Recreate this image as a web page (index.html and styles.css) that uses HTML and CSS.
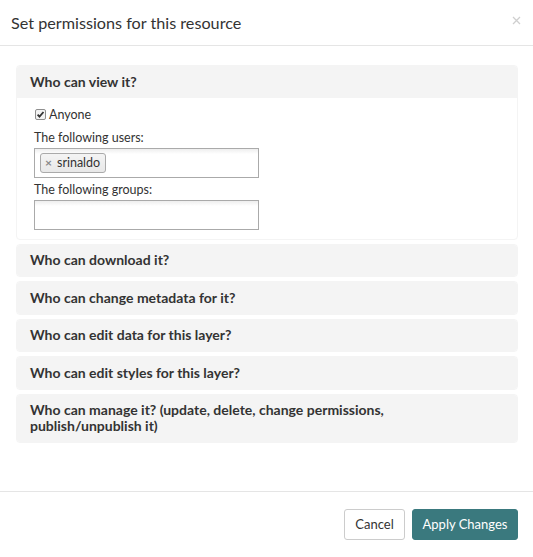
FILE: index.html
```html
<!DOCTYPE html>
<html>
<head>
<meta charset="utf-8">
<link rel="stylesheet" href="styles.css">
</head>
<body>
<div class="modal">
  <div class="modal-header">
    <h4 class="modal-title">Set permissions for this resource</h4>
    <button class="close" aria-label="Close">
      <svg width="9" height="9" viewBox="0 0 9 9"><path d="M1 1L8 8M8 1L1 8" stroke="#cfcfcf" stroke-width="1.3" fill="none"/></svg>
    </button>
  </div>
  <div class="modal-body">
    <div class="panel">
      <div class="panel-heading">Who can view it?</div>
      <div class="panel-body">
        <label class="check-row">
          <span class="checkbox">
            <svg width="11" height="11" viewBox="0 0 11 11"><rect x="0.5" y="0.5" width="10" height="10" rx="1.5" fill="#f3f3f3" stroke="#8f8f8f"/><path d="M2.6 5.6L4.5 7.6L8.5 3" stroke="#333" stroke-width="1.8" fill="none"/></svg>
          </span>
          <span>Anyone</span>
        </label>
        <div class="field-label">The following users:</div>
        <div class="tag-input">
          <span class="tag"><span class="tag-x">×</span>srinaldo</span>
        </div>
        <div class="field-label">The following groups:</div>
        <div class="tag-input"></div>
      </div>
    </div>
    <div class="panel"><div class="panel-heading">Who can download it?</div></div>
    <div class="panel"><div class="panel-heading">Who can change metadata for it?</div></div>
    <div class="panel"><div class="panel-heading">Who can edit data for this layer?</div></div>
    <div class="panel"><div class="panel-heading">Who can edit styles for this layer?</div></div>
    <div class="panel"><div class="panel-heading">Who can manage it? (update, delete, change permissions,<br>publish/unpublish it)</div></div>
  </div>
  <div class="modal-footer">
    <button class="btn btn-default">Cancel</button>
    <button class="btn btn-primary">Apply Changes</button>
  </div>
</div>
</body>
</html>
```

FILE: styles.css
```css
* { box-sizing: border-box; }
html, body { margin: 0; padding: 0; background: #fff; }
body {
  font-family: Lato, "Open Sans", sans-serif;
  color: #333;
  font-size: 13px;
}
.modal { width: 533px; height: 557px; background: #fff; }
.modal-header {
  display: flex;
  justify-content: space-between;
  align-items: flex-start;
  padding: 12px 11px 12px 11px;
  border-bottom: 1px solid #e5e5e5;
  height: 46px;
}
.modal-title {
  margin: 0;
  font-size: 16.2px;
  font-weight: 400;
  line-height: 21px;
  color: #333;
}
.close {
  border: 0;
  background: none;
  padding: 0;
  margin: 4px 1px 0 0;
  line-height: 0;
  cursor: pointer;
}
.modal-body {
  padding: 19px 15px 48px 16px;
  height: 445px;
}
.panel {
  background: #fff;
  border: 1px solid #f4f4f4;
  border-radius: 4px;
  margin-bottom: 4px;
  overflow: hidden;
}
.panel-heading {
  background: #f4f4f4;
  padding: 7.75px 13px 7.75px 13px;
  font-size: 14px;
  line-height: 16px;
  font-weight: 700;
  color: #333;
}
.panel-body {
  padding: 9px 17px 9px 17px;
}
.check-row {
  display: flex;
  align-items: center;
  gap: 3px;
  height: 16px;
  margin-bottom: 7px;
  font-size: 12.5px;
  color: #333;
}
.checkbox { display: inline-flex; margin-left: 1px; }
.field-label {
  font-size: 12.5px;
  line-height: 16px;
  color: #333;
  margin-bottom: 2px;
}
.tag-input {
  width: 225px;
  height: 30px;
  border: 1px solid #aaa;
  background: linear-gradient(#eee 0, #fff 5px, #fff 100%);
  padding: 1px 5px;
  display: flex;
  align-items: center;
  margin-bottom: 4px;
}
.tag-input:last-child { margin-bottom: 0; }
.tag {
  display: inline-flex;
  align-items: center;
  height: 20px;
  padding: 0 5px 0 4px;
  border: 1px solid #aaa;
  border-radius: 3px;
  background: linear-gradient(#f4f4f4, #e8e8e8);
  font-size: 12.5px;
  color: #333;
}
.tag-x {
  color: #888;
  font-weight: 700;
  font-size: 12px;
  margin-right: 5px;
}
.modal-footer {
  border-top: 1px solid #e5e5e5;
  padding: 17px 15px 17px 15px;
  display: flex;
  justify-content: flex-end;
  gap: 7px;
}
.btn {
  font-family: Lato, "Open Sans", sans-serif;
  font-size: 13px;
  height: 31px;
  border-radius: 3px;
  padding: 0;
  line-height: 29px;
  white-space: nowrap;
  text-align: center;
  cursor: pointer;
}
.btn-default {
  background: #fff;
  color: #333;
  border: 1px solid #ccc;
  width: 61px;
}
.btn-primary {
  background: #3a797e;
  color: #fff;
  border: 1px solid #3a797e;
  width: 106px;
}
```
